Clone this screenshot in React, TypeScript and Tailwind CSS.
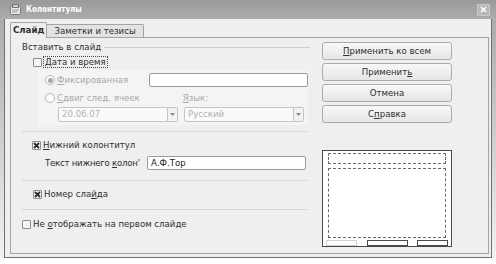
import React from 'react';

const U = ({ children }: { children: React.ReactNode }) => <span className="underline underline-offset-[1px]">{children}</span>;

function Check({ on, disabled }: { on?: boolean; disabled?: boolean }) {
  return (
    <div className={`w-[9px] h-[9px] shrink-0 border rounded-[1px] flex items-center justify-center ${disabled ? 'border-[#c4c4c4] bg-[#f6f6f6]' : 'border-[#8c8c8c] bg-[#f4f4f4]'} ${on ? 'bg-[#dcdcdc]' : ''}`}>
      {on && (
        <svg width="7" height="7" viewBox="0 0 7 7">
          <path d="M1 1 L6 6 M6 1 L1 6" stroke="#2a2a2a" strokeWidth="1.8" />
        </svg>
      )}
    </div>
  );
}

function Radio({ on }: { on?: boolean }) {
  return (
    <div className="w-[10px] h-[10px] shrink-0 rounded-full border border-[#b4b4b4] bg-white flex items-center justify-center">
      {on && <div className="w-[5px] h-[5px] rounded-full bg-[#a8a8a8]" />}
    </div>
  );
}

function Combo({ value }: { value: string }) {
  return (
    <div className="w-[120px] h-[15px] flex">
      <div className="flex-1 border border-[#c4c4c4] rounded-l-[2px] bg-[#fafafa] pl-[3px] flex items-center text-[#b0b0b0]">{value}</div>
      <div className="w-[10px] border border-l-0 border-[#c4c4c4] bg-[#f2f2f2] rounded-r-[2px] flex items-center justify-center">
        <svg width="5" height="3" viewBox="0 0 5 3"><path d="M0 0 H5 L2.5 3 Z" fill="#8a8a8a" /></svg>
      </div>
    </div>
  );
}

function Btn({ children }: { children: React.ReactNode }) {
  return (
    <div className="h-[18px] w-[130px] border border-[#ababab] rounded-[3px] bg-gradient-to-b from-[#f8f8f8] to-[#e6e6e6] flex items-center justify-center text-[#2e2e2e]">
      {children}
    </div>
  );
}

const Sep = () => <div className="h-px bg-[#d4d4d4] w-[285px]" />;

export default function App() {
  return (
    <div className="w-[496px] h-[264px] bg-white overflow-hidden text-[8.6px] leading-none text-[#2e2e2e]" style={{ fontFamily: '"DejaVu Sans", sans-serif' }}>
      {/* title bar */}
      <div className="h-[19px] bg-gradient-to-b from-[#9a9a9a] to-[#acacac] flex items-center pl-[10px] pr-[6px]">
        <svg width="11" height="11" viewBox="0 0 11 11" className="shrink-0">
          <rect x="0.5" y="2.5" width="10" height="8" rx="1" fill="#e8e8e8" stroke="#7a7a7a" />
          <rect x="2.5" y="0.5" width="6" height="3" fill="#cfcfcf" stroke="#7a7a7a" />
          <path d="M2 6 H9 M2 8 H7" stroke="#9a9a9a" />
        </svg>
        <span className="ml-[5px] text-white font-bold text-[8px]" style={{ fontFamily: '"DejaVu Sans Condensed", "DejaVu Sans", sans-serif' }}>Колонтитулы</span>
        <div className="ml-auto w-[13px] h-[12px] bg-[#b9b9b9] border border-[#c8c8c8] flex items-center justify-center">
          <svg width="7" height="7" viewBox="0 0 7 7"><path d="M1 1 L6 6 M6 1 L1 6" stroke="white" strokeWidth="1.6" /></svg>
        </div>
      </div>

      {/* window body */}
      <div className="h-[239px] px-[4px] bg-gradient-to-b from-[#acacac] to-[#f2f2f2]">
        <div className="h-full border border-t-0 border-[#707070] bg-[#efefef] pl-[5px] pr-[2px] pt-[3px] pb-[3px] flex flex-col">
          {/* tabs */}
          <div className="h-[15px] flex items-end">
            <div className="relative z-10 -mb-px h-[16px] px-[2px] border border-b-0 border-[#a4a4a4] bg-[#efefef] font-bold flex items-center rounded-t-[2px]">Слайд</div>
            <div className="h-[13px] px-[7px] border border-l-0 border-b-0 border-[#a4a4a4] bg-[#e3e3e3] flex items-center rounded-tr-[2px]">Заметки и тезисы</div>
          </div>

          {/* panel */}
          <div className="flex-1 border border-[#a4a4a4] bg-[#efefef] flex">
            {/* left column */}
            <div className="pl-[11px] w-[297px] shrink-0 flex flex-col">
              <div className="mt-[3px] h-[12px] flex items-center">
                <span>Вставить в слайд</span>
                <div className="ml-[3px] flex-1 h-px bg-[#cfcfcf] mr-[-2px]" />
              </div>

              <div className="mt-[3px] h-[12px] flex items-center pl-[11px]">
                <Check />
                <span className="ml-[1px] border border-dotted border-[#444] px-[1px] h-[12px] flex items-center"><U>Д</U>ата и время</span>
              </div>

              <div className="mt-[2px] ml-[16px] h-[55px] bg-[#f4f4f4] pl-[7px] flex flex-col text-[#a9a9a9]">
                <div className="mt-[3px] h-[14px] flex items-center">
                  <Radio on />
                  <span className="ml-[2px]"><U>Ф</U>иксированная</span>
                  <div className="ml-auto w-[159px] h-[14px] border border-[#9c9c9c] rounded-[2px] bg-white" />
                </div>
                <div className="mt-[5px] h-[12px] flex items-center">
                  <Radio />
                  <span className="ml-[2px]"><U>С</U>двиг след. ячеек</span>
                  <span className="ml-[43px]"><U>Я</U>зык:</span>
                </div>
                <div className="mt-[3px] h-[15px] flex items-center pl-[13px] gap-[6px]">
                  <Combo value="20.06.07" />
                  <Combo value="Русский" />
                </div>
              </div>

              <div className="mt-[6px]"><Sep /></div>

              <div className="mt-[8px] h-[11px] flex items-center pl-[10px]">
                <Check on />
                <span className="ml-[2px]"><U>Н</U>ижний колонтитул</span>
              </div>

              <div className="mt-[5px] h-[14px] flex items-center pl-[23px]">
                <span className="w-[103px] whitespace-nowrap tracking-[-0.25px]">Текст нижнего <U>к</U>олон'</span>
                <div className="ml-[-1px] w-[159px] h-[14px] border border-[#9c9c9c] rounded-[2px] bg-white pl-[3px] flex items-center text-[#222]">А.Ф.Тор</div>
              </div>

              <div className="mt-[10px]"><Sep /></div>

              <div className="mt-[7px] h-[12px] flex items-center pl-[11px]">
                <Check on />
                <span className="ml-[2px]">Номер сла<U>й</U>да</span>
              </div>

              <div className="mt-[9px]"><Sep /></div>

              <div className="mt-[8px] h-[12px] flex items-center">
                <Check />
                <span className="ml-[2px]">Не <U>о</U>тображать на первом слайде</span>
              </div>
            </div>

            {/* right column */}
            <div className="ml-[14px] w-[130px] flex flex-col">
              <div className="mt-[4px] flex flex-col gap-[3px]">
                <Btn><U>П</U>рименить ко всем</Btn>
                <Btn>Применит<U>ь</U></Btn>
                <Btn>Отмена</Btn>
                <Btn>С<U>п</U>равка</Btn>
              </div>

              <div className="mt-[27px] w-[130px] h-[97px] border border-[#4a4a4a] bg-white px-[3px] pt-[2px] flex flex-col">
                <div className="mx-[2px] h-[11px] border border-dashed border-[#6a6a6a]" />
                <div className="mx-[2px] mt-[4px] h-[70px] border border-dashed border-[#6a6a6a]" />
                <div className="mt-[2px] h-[6px] flex">
                  <div className="w-[31px] border border-[#d0d0d0]" />
                  <div className="ml-[10px] w-[41px] border border-[#4a4a4a]" />
                  <div className="ml-[9px] w-[31px] border border-[#4a4a4a]" />
                </div>
              </div>
            </div>
          </div>
        </div>
      </div>
    </div>
  );
}
